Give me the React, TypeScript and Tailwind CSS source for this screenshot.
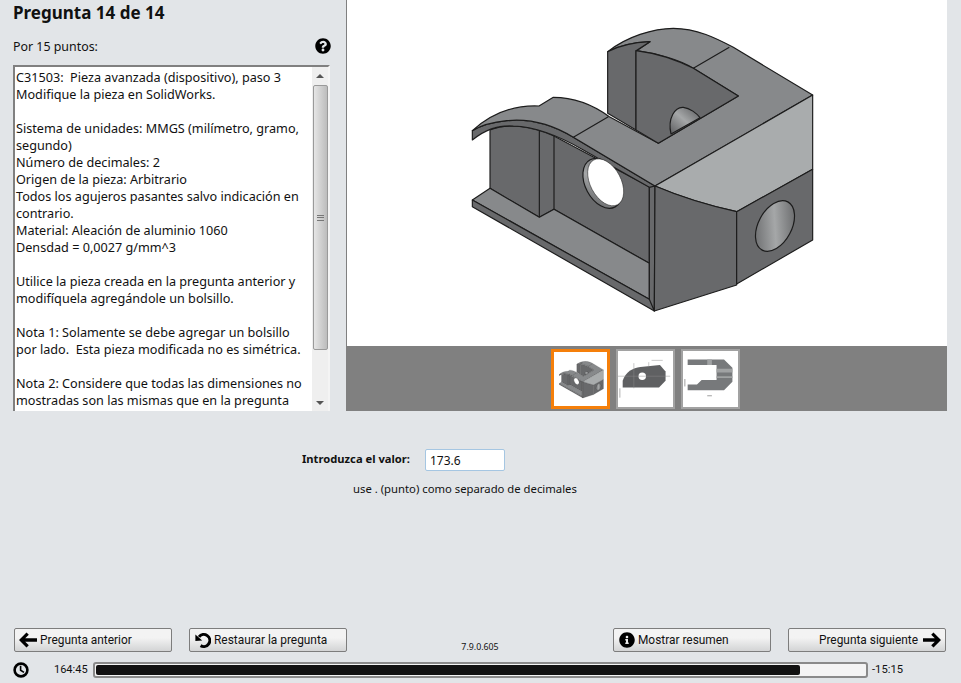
import { FaInfoCircle, FaQuestionCircle } from "react-icons/fa";

const questionLines = [
  "C31503:  Pieza avanzada (dispositivo), paso 3",
  "Modifique la pieza en SolidWorks.",
  "",
  "Sistema de unidades: MMGS (milímetro, gramo,",
  "segundo)",
  "Número de decimales: 2",
  "Origen de la pieza: Arbitrario",
  "Todos los agujeros pasantes salvo indicación en",
  "contrario.",
  "Material: Aleación de aluminio 1060",
  "Densdad = 0,0027 g/mm^3",
  "",
  "Utilice la pieza creada en la pregunta anterior y",
  "modifíquela agregándole un bolsillo.",
  "",
  "Nota 1: Solamente se debe agregar un bolsillo",
  "por lado.  Esta pieza modificada no es simétrica.",
  "",
  "Nota 2: Considere que todas las dimensiones no",
  "mostradas son las mismas que en la pregunta",
];

function PartDrawing({ className, id }: { className: string; id: string }) {
  const dark = "#68696b";
  const mid = "#87898b";
  const line = "#1c1c1c";
  return (
    <svg viewBox="0 0 1200 930" className={className}>
      <defs>
        <linearGradient id={id} x1="0" y1="1" x2="1" y2="0">
          <stop offset="0" stopColor="#5c5d5f" />
          <stop offset="0.5" stopColor="#a5a7a8" />
          <stop offset="1" stopColor="#57585a" />
        </linearGradient>
      </defs>
      <g stroke={line} strokeWidth="3.5" strokeLinejoin="round">
        {/* underside of the left arc */}
        <path
          fill={dark}
          d="M150 360 C200 340 270 345 342 378 L628 530 L628 760 L342 598 L298 622 L150 535 Z"
        />
        <path fill="none" d="M298 355 L298 622 M342 375 L342 598" />
        <path fill={mid} d="M97 570 L150 535 L298 622 L342 598 L628 760 L628 868 Z" />
        <path fill={dark} d="M97 570 L628 868 L645 878 L643 903 L97 590 Z" />
        <path fill={dark} d="M628 525 L645 528 L643 903 L628 868 Z" />
        {/* lip along the arc */}
        <path
          fill={dark}
          d="M97 362 C125 345 160 336 200 332 C270 325 340 345 400 382 L645 528 L628 532 L430 420 C370 385 290 350 220 348 C170 345 135 360 97 390 Z"
        />
        {/* top surface */}
        <path
          fill={mid}
          d="M97 362 C160 305 230 285 297 288 L340 262 C400 262 460 285 508 320 L655 400 L895 258 L760 175 C720 150 650 130 590 122 L630 95 C570 98 535 108 503 125 C560 80 640 55 700 55 C770 55 830 85 880 112 L1118 255 L645 528 L400 382 C340 345 270 325 200 332 C160 336 125 345 97 362 Z"
        />
        {/* slot walls */}
        <path fill={dark} d="M503 125 C535 108 570 98 630 95 L588 122 L588 360 L503 310 Z" />
        <path fill={dark} d="M588 122 C650 130 710 150 760 175 L895 258 L655 400 L588 360 Z" />
        <path fill={`url(#${id})`} d="M693 372 C682 325 705 290 730 292 C750 294 770 310 780 323 Z" />
        <path fill="none" d="M760 175 L868 112 M400 382 L505 320" />
        <ellipse cx="488" cy="520" rx="52" ry="80" fill={`url(#${id})`} transform="rotate(-28 488 520)" />
        <ellipse cx="497" cy="517" rx="46" ry="76" fill="#ffffff" strokeWidth="1.5" transform="rotate(-28 497 517)" />
        {/* block faces */}
        <path fill="#a9acad" d="M645 528 L1118 255 L1118 478 L890 605 C800 585 720 560 645 528 Z" />
        <path fill={dark} d="M645 528 C720 560 800 585 890 605 L890 825 L643 903 Z" />
        <path fill={dark} d="M890 605 L1118 478 L1118 690 L890 822 Z" />
        <ellipse cx="1005" cy="648" rx="50" ry="82" fill={`url(#${id})`} transform="rotate(28 1005 648)" />
      </g>
    </svg>
  );
}

function ArrowIcon({ flip }: { flip?: boolean }) {
  return (
    <svg viewBox="0 0 18 16" className={`h-[16px] w-[18px] ${flip ? "rotate-180" : ""}`}>
      <path d="M0 8 L7.5 0.5 L9.8 2.8 L6.2 6.3 H18 V9.7 H6.2 L9.8 13.2 L7.5 15.5 Z" fill="#000" />
    </svg>
  );
}

function RestoreIcon() {
  return (
    <svg viewBox="0 0 16 16" className="h-[16px] w-[16px]">
      <path d="M4 4.8 A6 6 0 1 1 5.6 13.6" fill="none" stroke="#000" strokeWidth="3" />
      <path d="M0.4 2.6 L7.2 8.4 L0.4 9 Z" fill="#000" />
    </svg>
  );
}

function ClockIcon() {
  return (
    <svg viewBox="0 0 16 16" className="h-[16px] w-[16px]">
      <circle cx="8" cy="8" r="6.4" fill="none" stroke="#000" strokeWidth="2.6" />
      <path d="M7.6 3.8 V8.2 L11 10.4" fill="none" stroke="#000" strokeWidth="1.6" />
    </svg>
  );
}

function FootButton({ children, className }: { children: React.ReactNode; className?: string }) {
  return (
    <button
      className={`flex h-[24px] w-[158px] items-center rounded-[2px] border border-[#7d7d7d] bg-gradient-to-b from-[#f3f3f3] from-40% to-[#d3d4d5] text-[11.9px] text-[#111] ${className ?? ""}`}
      style={{ fontFamily: "Roboto, sans-serif" }}
    >
      {children}
    </button>
  );
}

export default function App() {
  return (
    <div
      className="flex h-[683px] w-[961px] flex-col overflow-hidden bg-[#e2e5e8] text-[12px] text-[#111]"
      style={{ fontFamily: '"Noto Sans", sans-serif' }}
    >
      <div className="flex h-[411px]">
        {/* question */}
        <div className="flex w-[346px] flex-col pl-[13px] pr-[16px]">
          <h1 className="text-[17px] font-bold leading-[25px] text-[#111]">Pregunta 14 de 14</h1>
          <div className="mt-[13px] flex h-[17px] items-center justify-between">
            <span className="pt-[2px] text-[12.4px]">Por 15 puntos:</span>
            <FaQuestionCircle className="mb-px mr-[-1px] h-[16px] w-[16px] text-black" />
          </div>
          <div className="mt-[10px] flex h-[346px] border-l-2 border-t-2 border-r-2 border-l-[#808080] border-t-[#808080] border-r-[#f4f4f4] bg-white">
            <div className="flex-1 overflow-hidden whitespace-pre pl-px pt-[2px] text-[12.65px] leading-[17px]">
              {questionLines.map((row, i) => (
                <div key={i} className="h-[17px]">
                  {row}
                </div>
              ))}
            </div>
            <div className="flex w-[16px] flex-col items-center bg-[#efefef]">
              <div className="flex h-[18px] items-center">
                <div className="h-0 w-0 border-x-[4px] border-b-[4px] border-x-transparent border-b-[#555]" />
              </div>
              <div className="flex h-[265px] w-[15px] items-center justify-center rounded-[2px] border border-[#9a9a9a] bg-gradient-to-r from-[#e6e6e6] to-[#bcbcbc]">
                <div className="h-[6px] w-[7px] border-y border-[#777] bg-[linear-gradient(#777,#777)] bg-[length:100%_1px] bg-center bg-no-repeat" />
              </div>
              <div className="flex flex-1 items-end pb-[6px]">
                <div className="h-0 w-0 border-x-[4px] border-t-[4px] border-x-transparent border-t-[#555]" />
              </div>
            </div>
          </div>
        </div>

        {/* images */}
        <div className="flex w-[601px] flex-col border-l border-[#808080]">
          <div className="h-[346px] bg-white pl-[93px] pt-[10px]">
            <PartDrawing id="holeMain" className="h-[310px] w-[400px]" />
          </div>
          <div className="flex h-[65px] justify-center gap-[6px] bg-[#808080] pr-[3px] pt-[3px]">
            <div className="flex h-[60px] w-[59px] items-center justify-center border-[3px] border-[#f57f0a] bg-white">
              <PartDrawing id="holeThumb" className="h-[44px] w-[52px] blur-[0.4px]" />
            </div>
            <div className="h-[60px] w-[59px] border-2 border-[#a2a2a2] bg-white">
              <svg viewBox="0 0 59 60" className="h-full w-full blur-[0.4px]">
                <path d="M5 32 C8 22 16 18 24 17 L45 15 L51 22 L51 32 L44 39 L5 39 Z" fill="#5f6062" />
                <circle cx="26" cy="27" r="4" fill="#fff" />
                <path d="M0 27 H56 M17 13 V40 M33 12 V17 M36 10 H48" stroke="#8a8a8a" strokeWidth="0.5" fill="none" />
                <path d="M2 40 V50" stroke="#aaa" strokeWidth="1" />
              </svg>
            </div>
            <div className="h-[60px] w-[59px] border-2 border-[#a2a2a2] bg-white">
              <svg viewBox="0 0 59 60" className="h-full w-full blur-[0.4px]">
                <path d="M5 9 H44 L53 18 V33 L44 42 H5 V36 H15 L20 31 H36 V15 H5 Z" fill="#77797b" />
                <path d="M26 9 H31 V15 H26 Z M36 19 H53 V23 H36 Z M36 27 H53 V29 H36 Z" fill="#a0a2a3" />
                <path d="M2 30 V38 M26 48 H31" stroke="#999" strokeWidth="1" />
              </svg>
            </div>
          </div>
        </div>
      </div>

      {/* answer */}
      <div className="mt-[38px] flex h-[22px] items-center pl-[302px]">
        <label className="mb-[2px] w-[123px] text-[11.2px] font-bold">Introduzca el valor:</label>
        <input
          readOnly
          value="173.6"
          className="h-[22px] w-[80px] rounded-[2px] border border-[#a5c6e2] bg-white px-[4px] text-[12px] text-[#111]"
        />
      </div>
      <div className="mt-[9px] pl-[353px] text-[11.3px] leading-[18px]">use . (punto) como separado de decimales</div>

      {/* navigation */}
      <div className="mt-auto flex items-end justify-between pl-[14px] pr-[15px]">
        <div className="flex gap-[17px]">
          <FootButton className="pl-[4px]">
            <ArrowIcon />
            <span className="ml-[3px] pt-px">Pregunta anterior</span>
          </FootButton>
          <FootButton className="pl-[5px]">
            <RestoreIcon />
            <span className="ml-[3px] pt-px">Restaurar la pregunta</span>
          </FootButton>
        </div>
        <span className="text-[8.8px] leading-[10px]">7.9.0.605</span>
        <div className="flex gap-[17px]">
          <FootButton className="pl-[5px]">
            <FaInfoCircle className="mr-[3px] h-[16px] w-[16px] text-black" />
            <span className="pt-px">Mostrar resumen</span>
          </FootButton>
          <FootButton className="justify-end pr-[4px]">
            <span className="mr-[5px] pt-px">Pregunta siguiente</span>
            <ArrowIcon flip />
          </FootButton>
        </div>
      </div>

      {/* timer */}
      <div className="mb-[5px] mt-[10px] flex h-[16px] items-center pl-[13px]">
        <ClockIcon />
        <span className="ml-[25px] w-[39px] text-[11px]" style={{ fontFamily: "Roboto, sans-serif" }}>
          164:45
        </span>
        <div className="h-[16px] w-[775px] rounded-[3px] border-2 border-[#8a8a8a] bg-[#f4f4f4] p-px">
          <div className="h-full w-[704px] rounded-[2px] bg-[#111]" />
        </div>
        <span className="ml-[4px] text-[11.2px]" style={{ fontFamily: "Roboto, sans-serif" }}>
          -15:15
        </span>
      </div>
    </div>
  );
}
